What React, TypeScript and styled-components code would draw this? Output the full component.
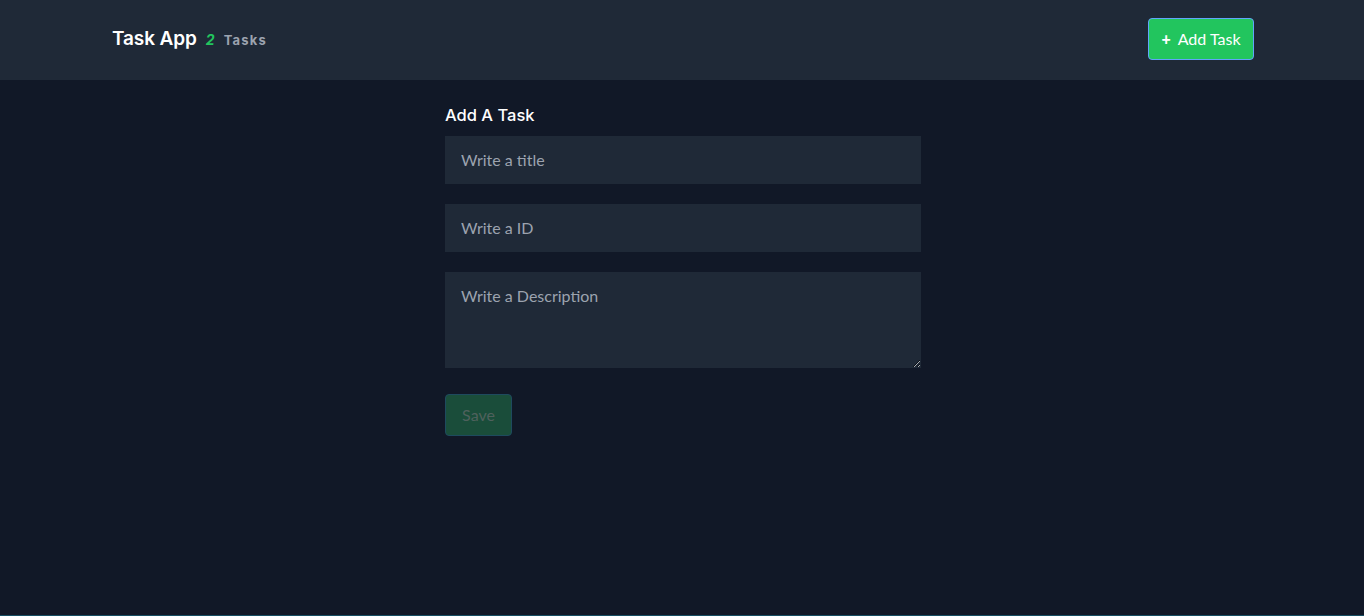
import React from "react";
import styled, { createGlobalStyle } from "styled-components";

const Global = createGlobalStyle`
  html, body { margin: 0; padding: 0; background: #111827; }
  * { box-sizing: border-box; }
`;

const Page = styled.div`
  min-height: 100vh;
  background: #111827;
  border-bottom: 1px solid #164e63;
  font-family: Lato, "Liberation Sans", sans-serif;
`;

const Header = styled.header`
  height: 80px;
  background: #1f2937;
`;

const HeaderInner = styled.div`
  height: 100%;
  padding: 0 110px 2px 112px;
  display: flex;
  align-items: center;
  justify-content: space-between;
`;

const Brand = styled.div`
  display: flex;
  align-items: baseline;
  gap: 9px;
  margin-top: -2px;
  font-family: Inter, "Open Sans", sans-serif;
`;

const Title = styled.h1`
  margin: 0;
  font-size: 19px;
  font-weight: 600;
  color: #ffffff;
  letter-spacing: -0.1px;
`;

const Count = styled.span`
  font-size: 14px;
  font-weight: 700;
  font-style: italic;
  color: #22c55e;
`;

const CountLabel = styled.span`
  font-size: 13px;
  font-weight: 700;
  color: #9ca3af;
  letter-spacing: 1.2px;
`;

const AddButton = styled.button`
  height: 42px;
  width: 106px;
  display: flex;
  align-items: center;
  justify-content: center;
  gap: 7px;
  padding: 0 0 2px 0;
  background: #22c55e;
  color: #ffffff;
  border: 1px solid #60a5fa;
  border-radius: 4px;
  font-family: Lato, "Liberation Sans", sans-serif;
  font-size: 16px;
  cursor: pointer;
`;

const Plus = styled.span`
  font-weight: 900;
  font-size: 16px;
`;

const Form = styled.form`
  width: 476px;
  margin-left: calc(50% - 237px);
  padding-top: 25px;
  display: flex;
  flex-direction: column;
  gap: 20px;
`;

const FormTitle = styled.h2`
  margin: 0 0 -10px 0;
  font-family: Inter, "Open Sans", sans-serif;
  font-weight: 500;
  font-size: 16.5px;
  color: #ffffff;
  line-height: 21px;
`;

const fieldStyles = `
  width: 100%;
  background: #1f2937;
  border: none;
  outline: none;
  color: #ffffff;
  font-family: Lato, "Liberation Sans", sans-serif;
  font-size: 16px;
  padding: 0 16px;
  &::placeholder { color: #9ca3af; }
`;

const Input = styled.input`
  ${fieldStyles}
  height: 48px;
  padding-bottom: 2px;
`;

const TextArea = styled.textarea`
  ${fieldStyles}
  height: 96px;
  padding-top: 14px;
  resize: vertical;
  display: block;
`;

const SaveButton = styled.button`
  align-self: flex-start;
  margin-top: 6px;
  width: 67px;
  height: 42px;
  padding: 0 0 2px 0;
  background: #1a4d3a;
  border: 1px solid #1e4a5e;
  border-radius: 4px;
  color: #4f615d;
  font-family: Lato, "Liberation Sans", sans-serif;
  font-size: 16px;
`;

export default function App() {
  return (
    <Page>
      <Global />
      <Header>
        <HeaderInner>
          <Brand>
            <Title>Task App</Title>
            <Count>2</Count>
            <CountLabel>Tasks</CountLabel>
          </Brand>
          <AddButton type="button">
            <Plus>+</Plus>
            <span>Add Task</span>
          </AddButton>
        </HeaderInner>
      </Header>
      <Form onSubmit={(e) => e.preventDefault()}>
        <FormTitle>Add A Task</FormTitle>
        <Input placeholder="Write a title" />
        <Input placeholder="Write a ID" />
        <TextArea placeholder="Write a Description" />
        <SaveButton type="submit" disabled>
          Save
        </SaveButton>
      </Form>
    </Page>
  );
}
